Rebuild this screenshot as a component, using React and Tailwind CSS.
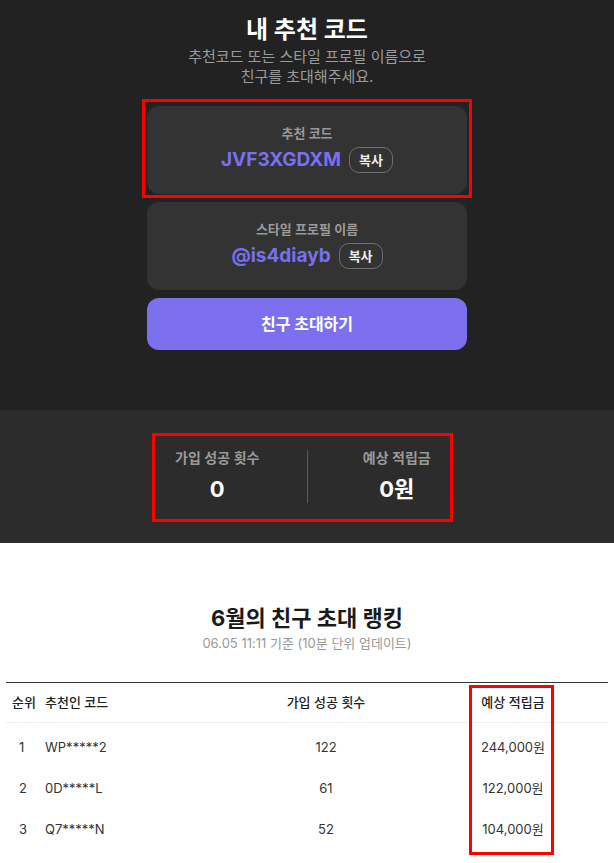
import React from "react";

const font = { fontFamily: "Inter, 'Noto Sans CJK KR', sans-serif" };

function CodeCard({ label, value }) {
  return (
    <div className="flex flex-col items-center rounded-[12px] bg-[#333333] pt-[18px] pb-[20px]">
      <div className="text-[13px] font-semibold leading-[18px] text-[#9a9a9a]">{label}</div>
      <div className="mt-[4px] flex h-[28px] items-center gap-[8px]">
        <span className="text-[19px] font-bold leading-[28px] text-[#7a6ff0]">{value}</span>
        <button className="h-[26px] rounded-[10px] border border-[#6e6e6e] px-[9px] text-[13px] font-semibold leading-[24px] text-[#eeeeee]">
          복사
        </button>
      </div>
    </div>
  );
}

const rows = [
  { rank: 1, code: "WP*****2", count: 122, amount: "244,000원" },
  { rank: 2, code: "0D*****L", count: 61, amount: "122,000원" },
  { rank: 3, code: "Q7*****N", count: 52, amount: "104,000원" },
];

export default function App() {
  return (
    <div className="relative w-[614px] min-h-[863px] bg-white" style={font}>
      {/* top section */}
      <section className="bg-[#222222] pt-[14px] pb-[60px]">
        <h1 className="text-center text-[24px] font-bold leading-[32px] text-white">내 추천 코드</h1>
        <p className="mt-[1px] text-center text-[15px] leading-[20px] text-[#9b9b9b]">
          추천코드 또는 스타일 프로필 이름으로
          <br />
          친구를 초대해주세요.
        </p>
        <div className="mx-auto mt-[19px] flex w-[320px] flex-col gap-[8px]">
          <CodeCard label="추천 코드" value="JVF3XGDXM" />
          <CodeCard label="스타일 프로필 이름" value="@is4diayb" />
          <button className="h-[52px] rounded-[12px] bg-[#7c70ef] text-[16px] font-bold text-white">
            친구 초대하기
          </button>
        </div>
      </section>

      {/* stats */}
      <section className="bg-[#2c2c2c] pt-[38px] pb-[39px]">
        <div className="mx-auto flex w-[358px] items-center">
          <div className="flex flex-1 flex-col items-center">
            <div className="text-[14px] font-semibold leading-[20px] text-[#9a9a9a]">가입 성공 횟수</div>
            <div className="mt-[6px] text-[22px] font-bold leading-[30px] text-white">0</div>
          </div>
          <div className="h-[53px] w-px bg-[#5a5a5a]" />
          <div className="flex flex-1 flex-col items-center">
            <div className="text-[14px] font-semibold leading-[20px] text-[#9a9a9a]">예상 적립금</div>
            <div className="mt-[6px] text-[22px] font-bold leading-[30px] text-white">0원</div>
          </div>
        </div>
      </section>

      {/* ranking */}
      <section className="bg-white pt-[60px] pb-[20px]">
        <h2 className="text-center text-[22px] font-bold leading-[30px] text-[#1a1a1a]">6월의 친구 초대 랭킹</h2>
        <p className="mt-[1px] text-center text-[13px] leading-[18px] text-[#999999]">
          06.05 11:11 기준 (10분 단위 업데이트)
        </p>
        <div className="mx-[6px] mt-[30px] border-t border-[#333333]">
          <div className="grid h-[40px] grid-cols-[34px_206px_160px_1fr] items-center border-b border-[#eeeeee] text-[13px] font-medium text-[#222222]">
            <div className="pl-[6px]">순위</div>
            <div className="pl-[5px]">추천인 코드</div>
            <div className="text-center">가입 성공 횟수</div>
            <div className="pl-[12px] text-center">예상 적립금</div>
          </div>
          <div className="pt-[4px]">
            {rows.map((r) => (
              <div
                key={r.rank}
                className="grid h-[41px] grid-cols-[34px_206px_160px_1fr] items-center text-[13px] text-[#333333]"
              >
                <div className="pl-[13px]">{r.rank}</div>
                <div className="pl-[5px]">{r.code}</div>
                <div className="text-center">{r.count}</div>
                <div className="pl-[12px] text-center">{r.amount}</div>
              </div>
            ))}
          </div>
        </div>
      </section>

      {/* annotation boxes */}
      <div className="pointer-events-none absolute left-[142px] top-[99px] h-[99px] w-[330px] border-[3px] border-[#ff0000]" />
      <div className="pointer-events-none absolute left-[152px] top-[433px] h-[89px] w-[301px] border-[3px] border-[#ff0000]" />
      <div className="pointer-events-none absolute left-[469px] top-[685px] h-[170px] w-[85px] border-[3px] border-[#ff0000]" />
    </div>
  );
}
